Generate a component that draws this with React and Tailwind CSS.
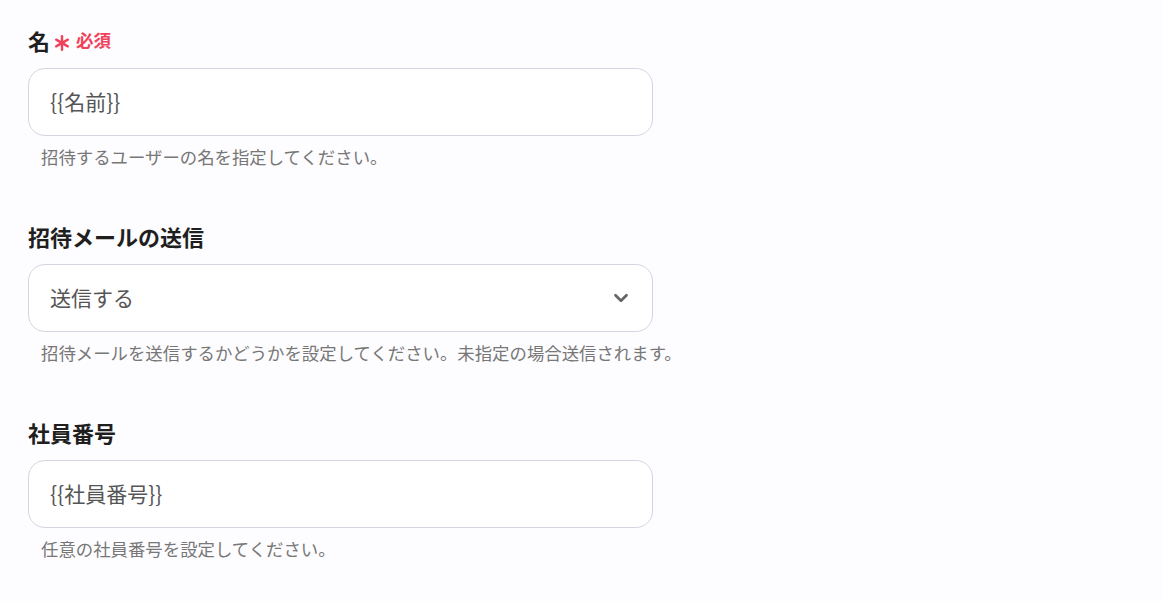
import { ChevronDown } from 'lucide-react';

const FONT = 'font-["Noto_Sans_CJK_JP","Noto_Sans",sans-serif]';

const Star = () => (
  <svg width="16" height="16" viewBox="0 0 16 16" className="ml-[4px] mt-[5px] text-[#f2425b]">
    <g stroke="currentColor" strokeWidth="2.4" strokeLinecap="round">
      <path d="M8 1.3v13.4" />
      <path d="M2.2 4.65l11.6 6.7" />
      <path d="M2.2 11.35l11.6-6.7" />
    </g>
  </svg>
);

const Label = ({ children, required }) => (
  <div className="flex items-center h-[28px]">
    <span className="text-[22px] font-bold text-[#1f1f1f] leading-[28px]">{children}</span>
    {required && (
      <>
        <Star />
        <span className="ml-[6px] text-[17.5px] font-bold text-[#f2425b] leading-[28px]">必須</span>
      </>
    )}
  </div>
);

const Helper = ({ children }) => (
  <p className="mt-[9px] pl-[13px] text-[17.4px] leading-[24px] text-[#777]">{children}</p>
);

const Field = ({ label, required, value, select, help }) => (
  <section>
    <Label required={required}>{label}</Label>
    <div className="mt-[14px] w-[625px] h-[68px] rounded-[17px] border border-[#d6d4e0] bg-white flex items-center justify-between pl-[21px] pr-[20px]">
      <span className="text-[21px] text-[#555]">{value}</span>
      {select && <ChevronDown size={22} strokeWidth={3} className="text-[#666]" />}
    </div>
    <Helper>{help}</Helper>
  </section>
);

export default function App() {
  return (
    <div className={`${FONT} min-h-[601px] bg-[#fdfcfe] pl-[28px] pt-[26px] flex flex-col gap-[53px]`}>
      <Field
        label="名"
        required
        value="{{名前}}"
        help="招待するユーザーの名を指定してください。"
      />
      <Field
        label="招待メールの送信"
        value="送信する"
        select
        help="招待メールを送信するかどうかを設定してください。未指定の場合送信されます。"
      />
      <Field
        label="社員番号"
        value="{{社員番号}}"
        help="任意の社員番号を設定してください。"
      />
    </div>
  );
}
